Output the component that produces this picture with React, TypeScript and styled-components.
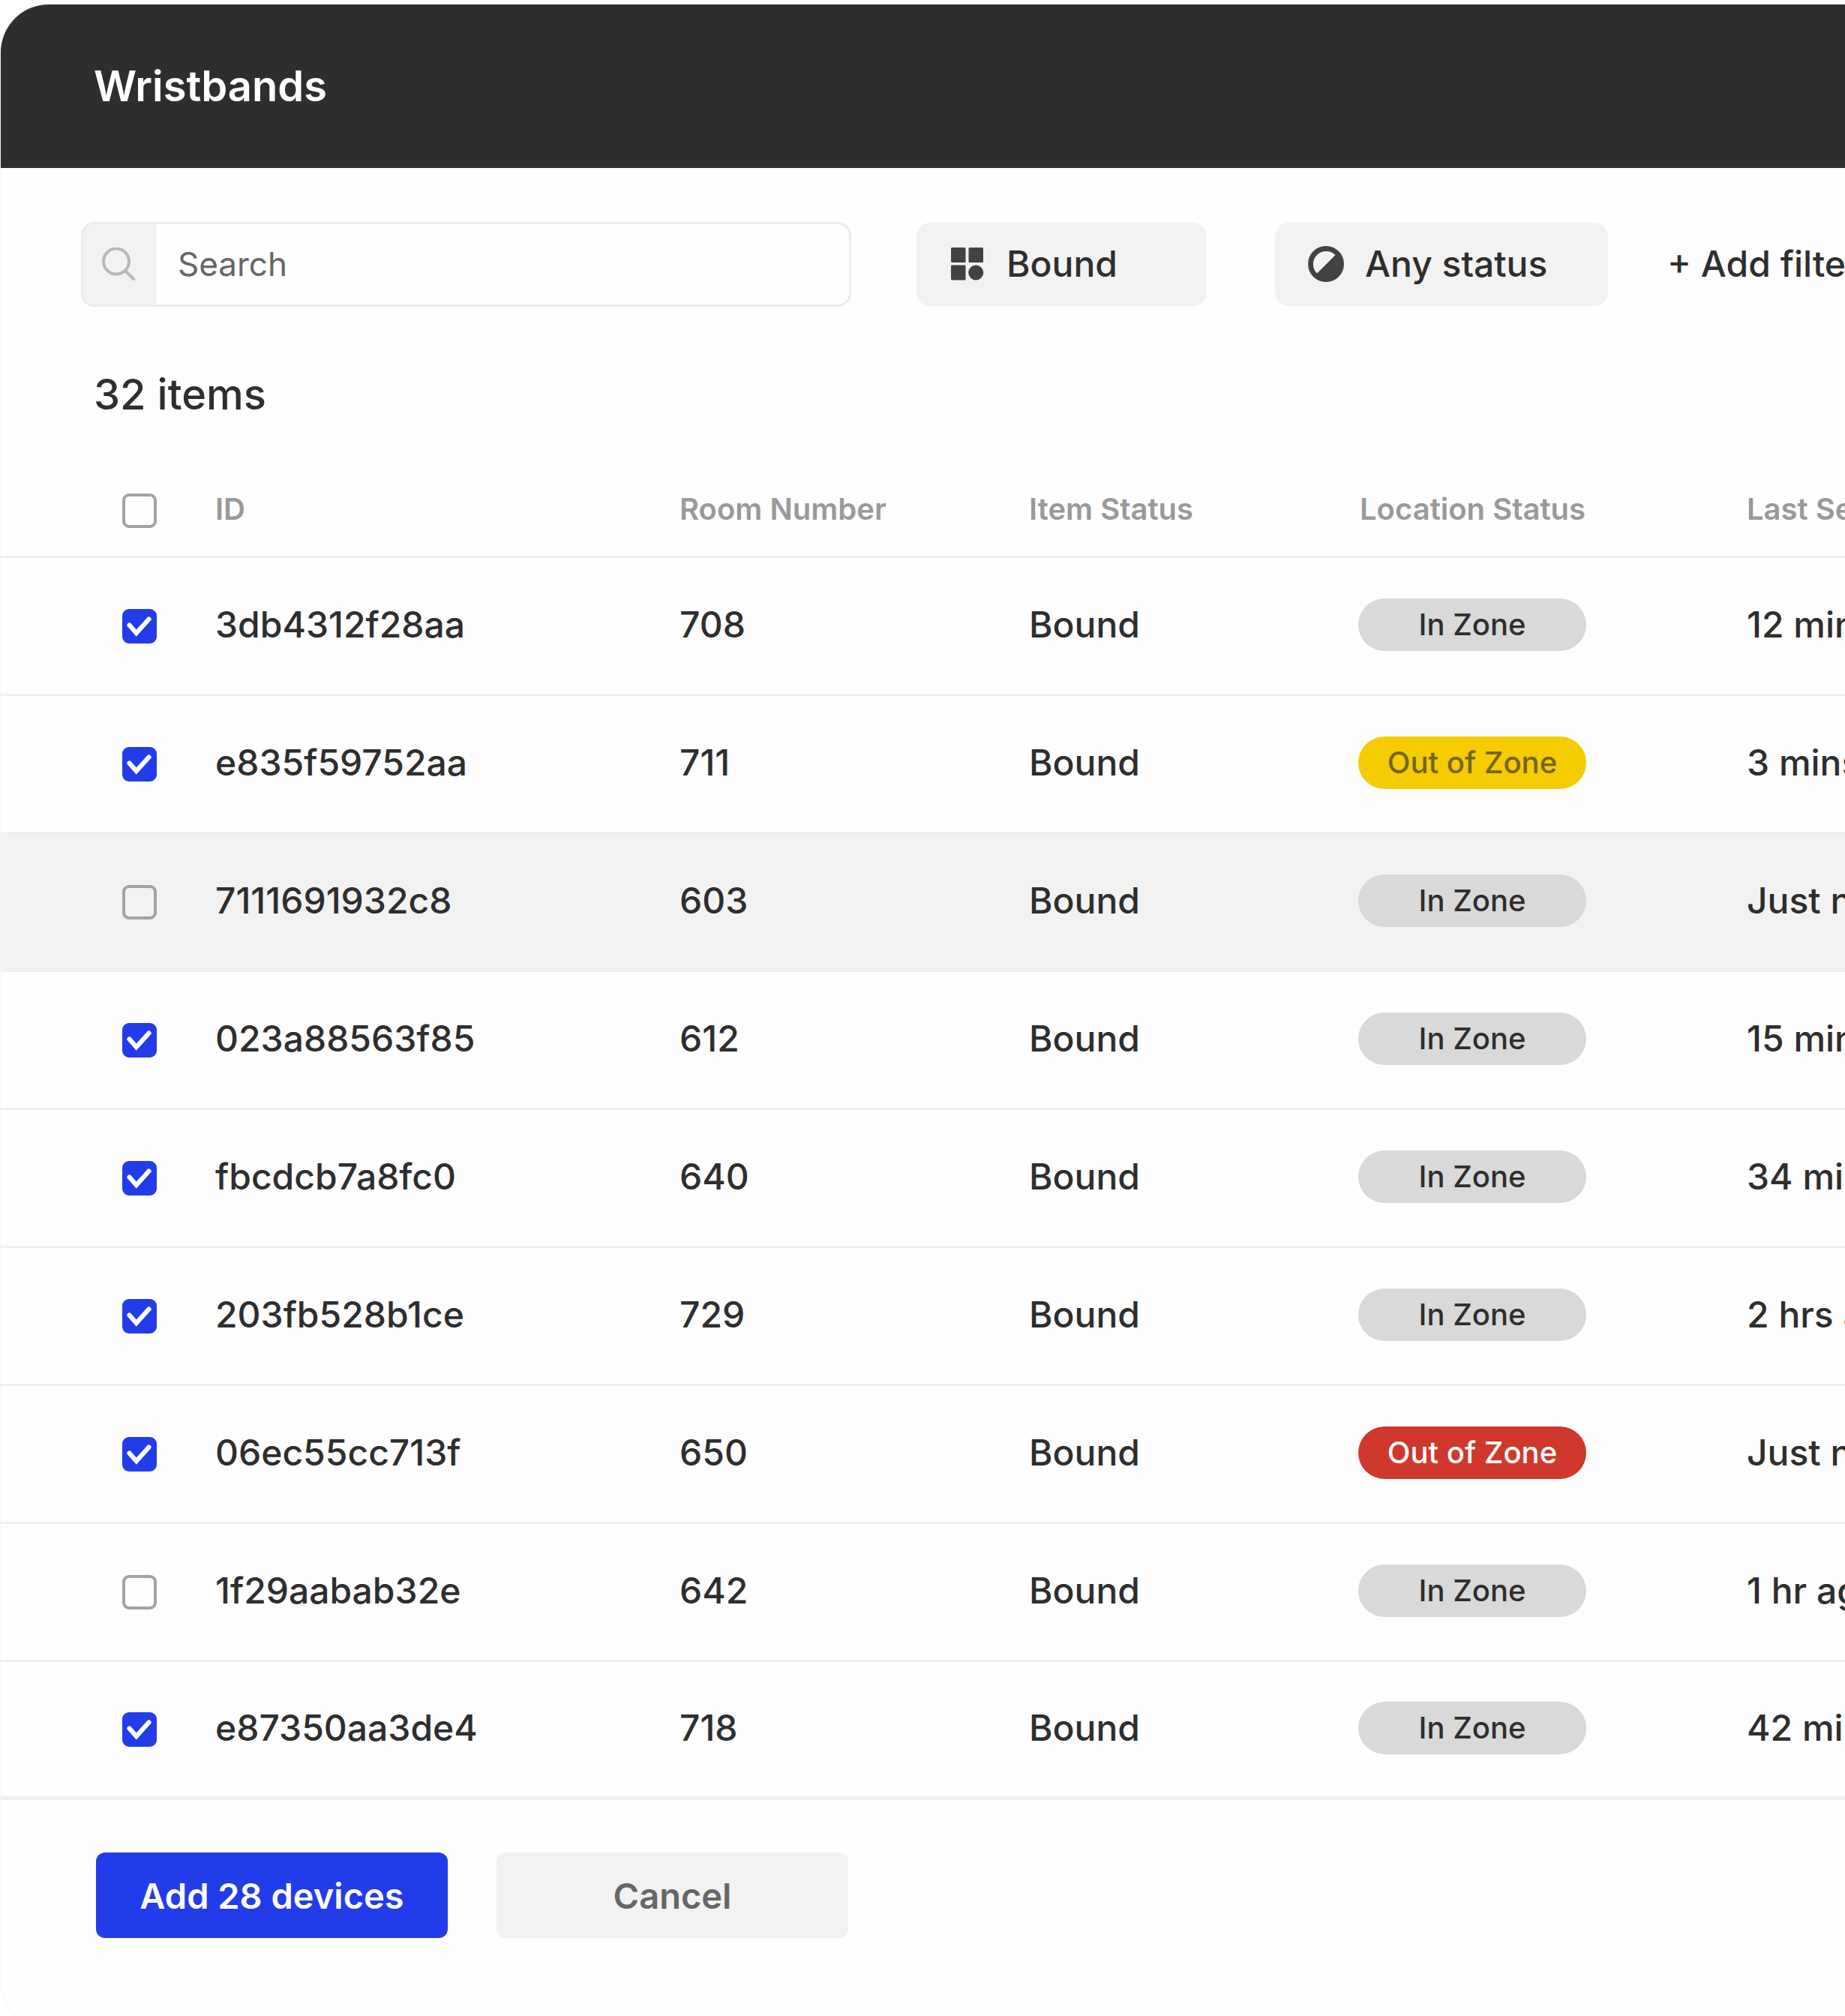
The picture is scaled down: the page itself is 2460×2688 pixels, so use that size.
import React, { useState } from "react";
import styled, { createGlobalStyle } from "styled-components";

const GlobalStyle = createGlobalStyle`
  *, *::before, *::after { box-sizing: border-box; }
  body {
    margin: 0;
    background: #ffffff;
    color: #2e2e2e;
    font-family: Inter, "Liberation Sans", sans-serif;
  }
  button, input { font: inherit; color: inherit; }
`;

const Page = styled.div`
  height: 100vh;
  padding: 6px 0 0 1px;
  overflow: hidden;
`;

const Panel = styled.main`
  background: #fefefe;
  border-radius: 64px 0 0 64px;
  box-shadow: 0 0 0 1px #f5f5f5;
  padding-bottom: 121px;
`;

const Header = styled.header`
  display: flex;
  align-items: center;
  height: 218px;
  padding: 0 124px;
  background: #2e2e2e;
  border-top-left-radius: 64px;
`;

const Title = styled.h1`
  margin: 0;
  font-size: 56px;
  line-height: 64px;
  font-weight: 600;
  color: #ffffff;
`;

const Toolbar = styled.div`
  display: flex;
  align-items: center;
  padding: 72px 0 0 107px;
  white-space: nowrap;
`;

const SearchBox = styled.label`
  display: flex;
  flex: 0 0 1027px;
  height: 113px;
  margin-right: 87px;
  border: 3px solid #ececec;
  border-radius: 18px;
  overflow: hidden;
`;

const SearchIcon = styled.span`
  display: flex;
  align-items: center;
  flex: 0 0 98px;
  padding-left: 24px;
  background: #f2f2f2;
`;

const SearchInput = styled.input`
  flex: 1;
  min-width: 0;
  padding: 0 28px 2px;
  border: 0;
  outline: 0;
  background: transparent;
  font-size: 44px;
  &::placeholder { color: #666666; opacity: 1; }
`;

const FilterButton = styled.button<{ $width: number }>`
  display: flex;
  align-items: center;
  gap: 28px;
  flex: 0 0 ${(p) => p.$width}px;
  height: 111px;
  margin-right: 91px;
  padding: 0 44px 2px;
  border: 0;
  border-radius: 18px;
  background: #f2f2f2;
  font-size: 48px;
  font-weight: 500;
`;

const AddFilter = styled.button`
  padding: 0 0 2px;
  margin-left: -12px;
  border: 0;
  background: none;
  font-size: 48px;
  font-weight: 500;
`;

const Count = styled.h2`
  margin: 0;
  padding: 85px 124px 71px;
  font-size: 56px;
  line-height: 64px;
  font-weight: 500;
`;

const Table = styled.table`
  width: 100%;
  table-layout: fixed;
  border-collapse: separate;
  border-spacing: 0;
  white-space: nowrap;
`;

const HeadCell = styled.th<{ $width?: number }>`
  width: ${(p) => (p.$width ? `${p.$width}px` : "auto")};
  height: 115px;
  padding: 0 0 12px;
  border-bottom: 3px solid #f0f0f0;
  text-align: left;
  font-size: 40px;
  line-height: 48px;
  font-weight: 600;
  color: #999999;
`;

const Row = styled.tr<{ $muted?: boolean }>`
  background: ${(p) => (p.$muted ? "#f2f2f2" : "transparent")};
  &:last-child td { border-bottom-width: 5px; }
`;

const Cell = styled.td`
  height: 184px;
  padding: 0 0 4px;
  border-bottom: 3px solid #f0f0f0;
  font-size: 48px;
  line-height: 56px;
  font-weight: 500;
`;

const Check = styled.span`
  display: grid;
  width: 46px;
  height: 46px;
  margin: 4px 0 0 162px;
  & > * { grid-area: 1 / 1; }
  svg { pointer-events: none; }
`;

const CheckInput = styled.input`
  appearance: none;
  width: 46px;
  height: 46px;
  margin: 0;
  border: 4px solid #a3a3a3;
  border-radius: 9px;
  &:checked { background: #233cea; border-color: #233cea; }
`;

type Zone = "in" | "warn" | "alert";

const pillColors: Record<Zone, { bg: string; fg: string }> = {
  in: { bg: "#d9d9d9", fg: "#2e2e2e" },
  warn: { bg: "#f5cc00", fg: "#736424" },
  alert: { bg: "#cf382c", fg: "#ffffff" },
};

const Pill = styled.span<{ $zone: Zone }>`
  display: flex;
  align-items: center;
  justify-content: center;
  width: 304px;
  height: 70px;
  margin-left: -2px;
  border-radius: 35px;
  background: ${(p) => pillColors[p.$zone].bg};
  color: ${(p) => pillColors[p.$zone].fg};
  font-size: 40px;
  line-height: 48px;
`;

const Footer = styled.footer`
  display: flex;
  gap: 65px;
  padding: 70px 127px 0;
`;

const Action = styled.button<{ $primary?: boolean }>`
  width: 469px;
  height: 114px;
  padding: 0;
  border: 0;
  border-radius: 12px;
  background: ${(p) => (p.$primary ? "#233cea" : "#f2f2f2")};
  color: ${(p) => (p.$primary ? "#ffffff" : "#666666")};
  font-size: 47px;
  font-weight: 600;
`;

interface Band {
  id: string;
  room: string;
  zone: Zone;
  seen: string;
  selected: boolean;
}

const bands: Band[] = [
  { id: "3db4312f28aa", room: "708", zone: "in", seen: "12 mins ago", selected: true },
  { id: "e835f59752aa", room: "711", zone: "warn", seen: "3 mins ago", selected: true },
  { id: "7111691932c8", room: "603", zone: "in", seen: "Just now", selected: false },
  { id: "023a88563f85", room: "612", zone: "in", seen: "15 mins ago", selected: true },
  { id: "fbcdcb7a8fc0", room: "640", zone: "in", seen: "34 mins ago", selected: true },
  { id: "203fb528b1ce", room: "729", zone: "in", seen: "2 hrs ago", selected: true },
  { id: "06ec55cc713f", room: "650", zone: "alert", seen: "Just now", selected: true },
  { id: "1f29aabab32e", room: "642", zone: "in", seen: "1 hr ago", selected: false },
  { id: "e87350aa3de4", room: "718", zone: "in", seen: "42 mins ago", selected: true },
];

function Checkbox({ label, initial }: { label: string; initial: boolean }) {
  const [checked, setChecked] = useState(initial);
  return (
    <Check>
      <CheckInput
        type="checkbox"
        aria-label={label}
        checked={checked}
        onChange={(e) => setChecked(e.target.checked)}
      />
      {checked && (
        <svg width="46" height="46" viewBox="0 0 46 46" fill="none" aria-hidden="true">
          <path d="M9.5 21.5 18.8 32 35.5 13.5" stroke="#fff" strokeWidth="6.2" strokeLinecap="round" />
        </svg>
      )}
    </Check>
  );
}

export default function App() {
  return (
    <>
      <GlobalStyle />
      <Page>
        <Panel>
          <Header>
            <Title>Wristbands</Title>
          </Header>
          <Toolbar>
            <SearchBox>
              <SearchIcon>
                <svg width="46" height="46" viewBox="0 0 46 46" fill="none" stroke="#b8b8b8" strokeWidth="4" strokeLinecap="round" aria-hidden="true">
                  <circle cx="20" cy="18.5" r="17" />
                  <path d="M32 31 43 42" />
                </svg>
              </SearchIcon>
              <SearchInput type="search" placeholder="Search" aria-label="Search" />
            </SearchBox>
            <FilterButton type="button" $width={387}>
              <svg width="48" height="48" viewBox="0 0 48 48" fill="#424242" aria-hidden="true">
                <rect x="2" y="2" width="19.5" height="20" rx="1.5" />
                <rect x="25.5" y="2" width="19.5" height="20" rx="1.5" />
                <rect x="2" y="25.5" width="19.5" height="20" rx="1.5" />
                <circle cx="35.2" cy="35.5" r="10" />
              </svg>
              Bound
            </FilterButton>
            <FilterButton type="button" $width={444}>
              <svg width="48" height="48" viewBox="0 0 48 48" aria-hidden="true">
                <circle cx="24" cy="24" r="24" fill="#424242" />
                <path d="M12 36.5A17.3 17.3 0 0 1 36.5 12Z" fill="#f2f2f2" />
              </svg>
              Any status
            </FilterButton>
            <AddFilter type="button">+ Add filter</AddFilter>
          </Toolbar>
          <Count>32 items</Count>
          <Table>
            <thead>
              <tr>
                <HeadCell scope="col" $width={286}>
                  <Checkbox label="Select all" initial={false} />
                </HeadCell>
                <HeadCell scope="col" $width={619}>ID</HeadCell>
                <HeadCell scope="col" $width={466}>Room Number</HeadCell>
                <HeadCell scope="col" $width={441}>Item Status</HeadCell>
                <HeadCell scope="col" $width={516}>Location Status</HeadCell>
                <HeadCell scope="col">Last Seen</HeadCell>
              </tr>
            </thead>
            <tbody>
              {bands.map((b) => (
                <Row key={b.id} $muted={b.id === "7111691932c8"}>
                  <Cell>
                    <Checkbox label={`Select ${b.id}`} initial={b.selected} />
                  </Cell>
                  <Cell>{b.id}</Cell>
                  <Cell>{b.room}</Cell>
                  <Cell>Bound</Cell>
                  <Cell>
                    <Pill $zone={b.zone}>{b.zone === "in" ? "In Zone" : "Out of Zone"}</Pill>
                  </Cell>
                  <Cell>{b.seen}</Cell>
                </Row>
              ))}
            </tbody>
          </Table>
          <Footer>
            <Action type="button" $primary>Add 28 devices</Action>
            <Action type="button">Cancel</Action>
          </Footer>
        </Panel>
      </Page>
    </>
  );
}
